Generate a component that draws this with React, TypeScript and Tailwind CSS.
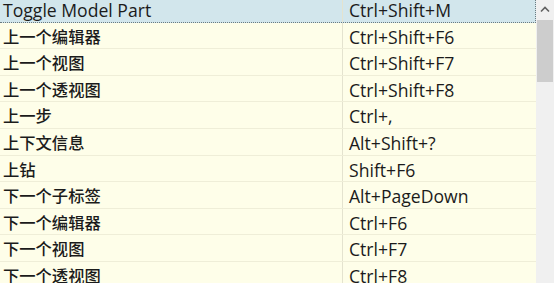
import React from "react";

const rows: Array<[string, string]> = [
  ["Toggle Model Part", "Ctrl+Shift+M"],
  ["上一个编辑器", "Ctrl+Shift+F6"],
  ["上一个视图", "Ctrl+Shift+F7"],
  ["上一个透视图", "Ctrl+Shift+F8"],
  ["上一步", "Ctrl+,"],
  ["上下文信息", "Alt+Shift+?"],
  ["上钻", "Shift+F6"],
  ["下一个子标签", "Alt+PageDown"],
  ["下一个编辑器", "Ctrl+F6"],
  ["下一个视图", "Ctrl+F7"],
  ["下一个透视图", "Ctrl+F8"],
];

const isCjk = (s: string) => /[\u4e00-\u9fff]/.test(s);

export default function App() {
  return (
    <div
      className="flex w-[554px] h-[283px] overflow-hidden bg-[#fefee9] text-[#1b1b1b]"
      style={{ fontFamily: '"Open Sans", "Noto Sans CJK SC", sans-serif' }}
    >
      {/* key binding table */}
      <div className="flex-1 flex flex-col -mt-[4px]">
        {rows.map(([cmd, key], i) => {
          const selected = i === 0;
          return (
            <div
              key={i}
              className={`flex h-[26.6px] shrink-0 items-center ${
                selected
                  ? "bg-[#d2e6ec] border-b border-r border-dotted border-[#6b7b80]"
                  : "border-b border-[#efeed8]"
              }`}
            >
              <div
                className={`w-[343px] pl-[3px] pt-[3px] h-full flex items-center border-r border-[#e4e3cf] whitespace-nowrap ${
                  isCjk(cmd) ? "text-[16.3px] font-medium" : "text-[17.6px]"
                }`}
              >
                {cmd}
              </div>
              <div className="pl-[6px] pt-[3px] h-full flex items-center whitespace-nowrap text-[17.6px]">{key}</div>
            </div>
          );
        })}
      </div>

      {/* vertical scrollbar */}
      <div className="w-[18px] shrink-0 bg-[#f0f0f0] flex flex-col items-center">
        <div className="h-[19px] w-full flex items-center justify-center">
          <svg width="10" height="7" viewBox="0 0 10 7">
            <path d="M1 5.5 L5 1.5 L9 5.5" fill="none" stroke="#606060" strokeWidth="1.6" />
          </svg>
        </div>
        <div className="w-[16px] h-[62px] bg-[#cdcdcd] mt-[1px]" />
      </div>
    </div>
  );
}
